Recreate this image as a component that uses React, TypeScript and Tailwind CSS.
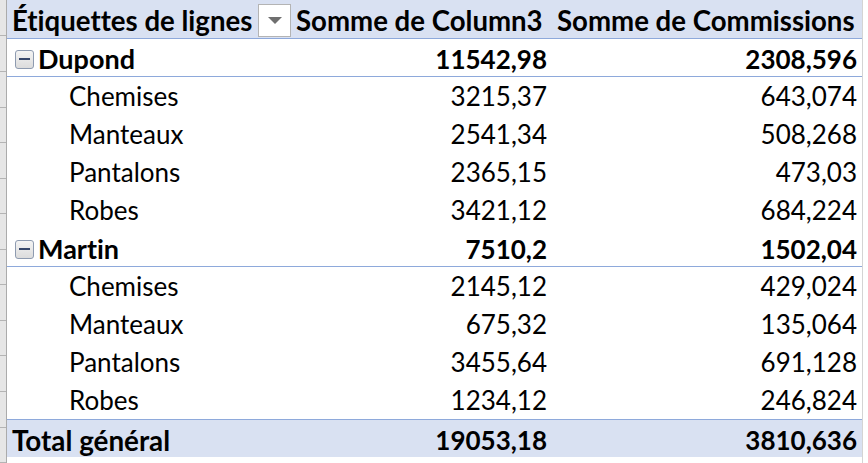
const groups = [
  {
    name: "Dupond",
    col3: "11542,98",
    comm: "2308,596",
    items: [
      { label: "Chemises", col3: "3215,37", comm: "643,074" },
      { label: "Manteaux", col3: "2541,34", comm: "508,268" },
      { label: "Pantalons", col3: "2365,15", comm: "473,03" },
      { label: "Robes", col3: "3421,12", comm: "684,224" },
    ],
  },
  {
    name: "Martin",
    col3: "7510,2",
    comm: "1502,04",
    items: [
      { label: "Chemises", col3: "2145,12", comm: "429,024" },
      { label: "Manteaux", col3: "675,32", comm: "135,064" },
      { label: "Pantalons", col3: "3455,64", comm: "691,128" },
      { label: "Robes", col3: "1234,12", comm: "246,824" },
    ],
  },
];

const MinusBox = () => (
  <span className="w-[19px] h-[19px] rounded-[3px] border border-[#8e9bb0] bg-gradient-to-b from-[#f4f4f4] to-[#dcdcdc] flex items-center justify-center flex-shrink-0">
    <span className="w-[11px] h-[2px] bg-[#36476b] block" />
  </span>
);

const Row = ({ children, className = "" }: { children: React.ReactNode; className?: string }) => (
  <div className={"grid grid-cols-[285px_261px_309px] items-center " + className}>{children}</div>
);

export default function App() {
  const rowCount = 13;
  return (
    <div className="w-[868px] h-[463px] bg-white flex overflow-hidden text-black text-[26px] font-['Lato',sans-serif] [font-variant-ligatures:none]">
      {/* Excel row headers strip */}
      <div className="w-[7px] flex-shrink-0 bg-[#e6e6e6] border-r border-[#ababab] flex flex-col">
        {Array.from({ length: rowCount }).map((_, i) => (
          <div key={i} className={"border-b border-[#b4b4b4] " + (i === 0 ? "h-[39px]" : "h-[38px]")} />
        ))}
      </div>

      <div className="w-[855px] flex-shrink-0 flex flex-col">
        {/* Header */}
        <Row className="h-[39px] bg-[#d9e1f2] border-b border-[#8ea9db] font-bold text-[27.6px]">
          <div className="flex items-center pl-[5px] h-full">
            <span>Étiquettes de lignes</span>
            <span className="ml-auto mr-[1px] w-[33px] h-[33px] bg-white border border-[#b4b4b4] flex items-center justify-center">
              <svg width="14" height="8" viewBox="0 0 14 8">
                <path d="M0 0 H14 L7 7 Z" fill="#6f6f6f" />
              </svg>
            </span>
          </div>
          <div className="pl-[4px] whitespace-nowrap">Somme de Column3</div>
          <div className="pl-[4px] whitespace-nowrap">Somme de Commissions</div>
        </Row>

        {groups.map((g) => (
          <div key={g.name}>
            <Row className="h-[38px] border-b border-[#8ea9db] font-bold">
              <div className="flex items-center gap-[4px] pl-[8px]">
                <MinusBox />
                <span className="text-[27px]">{g.name}</span>
              </div>
              <div className="text-right pr-[6px]">{g.col3}</div>
              <div className="text-right pr-[5px]">{g.comm}</div>
            </Row>
            {g.items.map((it) => (
              <Row key={it.label} className="h-[38px]">
                <div className="pl-[62px]">{it.label}</div>
                <div className="text-right pr-[6px]">{it.col3}</div>
                <div className="text-right pr-[5px]">{it.comm}</div>
              </Row>
            ))}
          </div>
        ))}

        {/* Grand total */}
        <Row className="h-[38px] bg-[#d9e1f2] border-t border-[#8ea9db] font-bold">
          <div className="pl-[5px] text-[27.8px]">Total général</div>
          <div className="text-right pr-[6px]">19053,18</div>
          <div className="text-right pr-[5px]">3810,636</div>
        </Row>
      </div>

      {/* Right grid edge */}
      <div className="flex-1 border-l border-[#d4d4d4]" />
    </div>
  );
}
